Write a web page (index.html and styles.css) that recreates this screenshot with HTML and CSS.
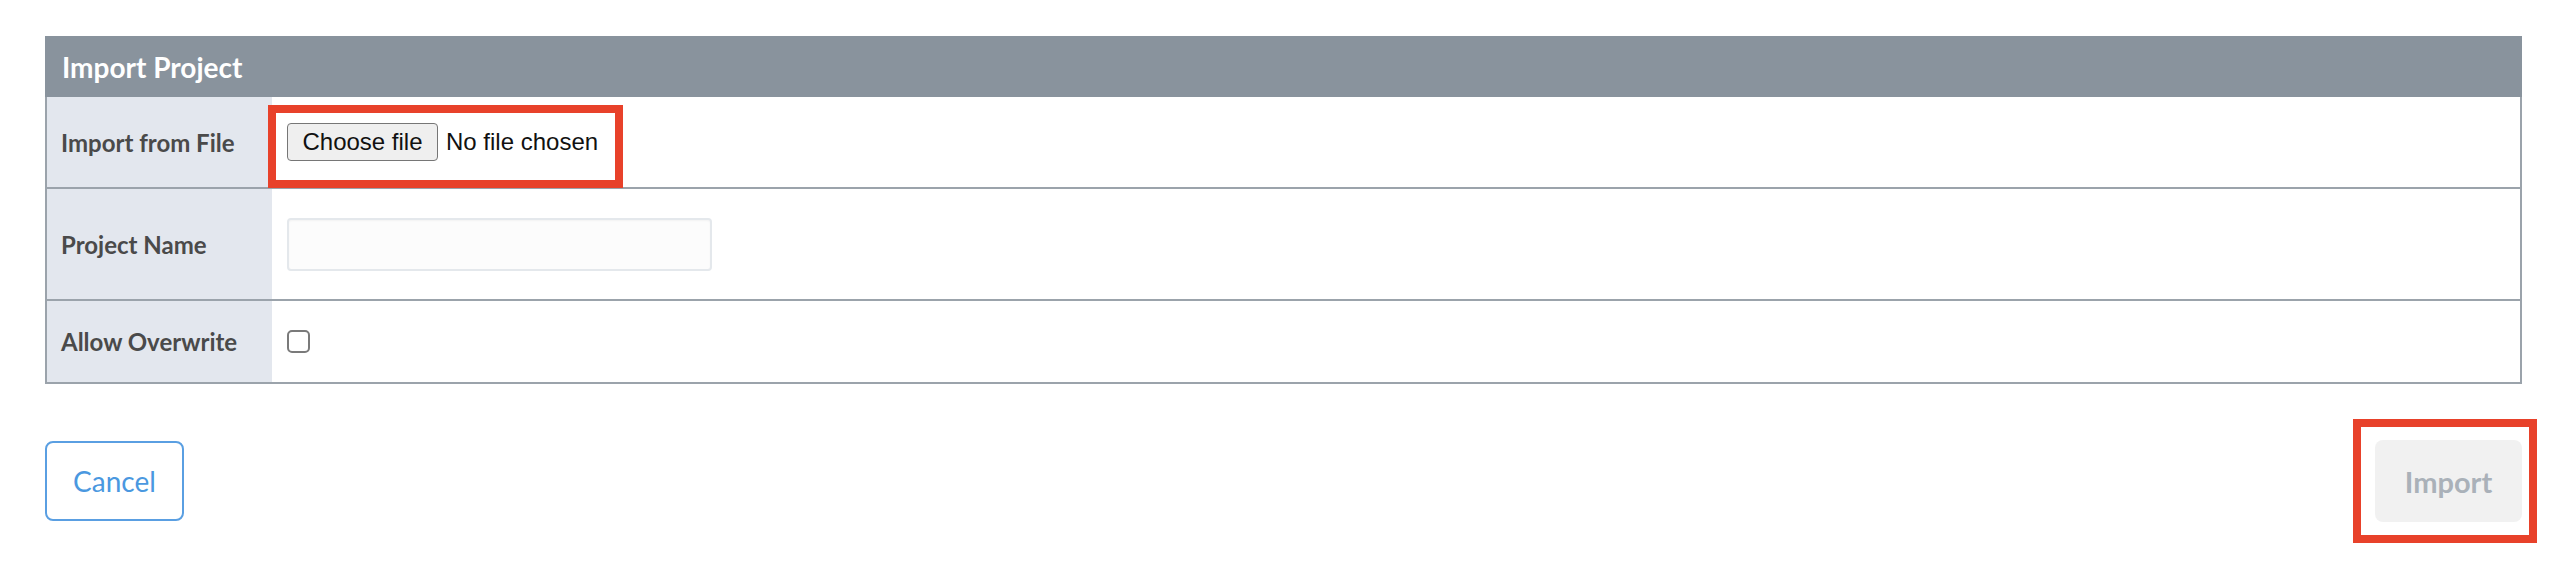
FILE: index.html
```html
<!DOCTYPE html>
<html lang="en">
<head>
  <meta charset="UTF-8">
  <meta name="viewport" content="width=device-width, initial-scale=1.0">
  <title>Import Project</title>
  <link rel="stylesheet" href="styles.css">
</head>
<body>
  <div class="page">
    <div class="panel">
      <div class="panel-header">Import Project</div>

      <div class="row row-file">
        <div class="label">Import from File</div>
        <div class="field">
          <label class="file-picker">
            <input type="file" hidden>
            <span class="file-btn">Choose file</span>
            <span class="file-name">No file chosen</span>
            <span class="highlight highlight-file"></span>
          </label>
        </div>
      </div>

      <div class="row row-name">
        <div class="label">Project Name</div>
        <div class="field">
          <input type="text" class="text-input">
        </div>
      </div>

      <div class="row row-overwrite">
        <div class="label">Allow Overwrite</div>
        <div class="field">
          <input type="checkbox" class="check">
        </div>
      </div>
    </div>

    <div class="actions">
      <button class="btn btn-cancel">Cancel</button>
      <span class="import-wrap">
        <button class="btn btn-import" disabled>Import</button>
        <span class="highlight highlight-import"></span>
      </span>
    </div>
  </div>
</body>
</html>
```

FILE: styles.css
```css
body {
  margin: 0;
  background: #fff;
  font-family: Lato, "Open Sans", sans-serif;
}

.page {
  padding: 36px 38px 40px 45px;
}

.panel {
  border: 2px solid #9ba3ab;
  border-top: none;
}

.panel-header {
  background: #89939d;
  color: #fff;
  font-weight: 700;
  font-size: 28px;
  height: 61px;
  display: flex;
  align-items: center;
  margin: 0 -2px;
  padding-left: 17px;
}

.row {
  display: grid;
  grid-template-columns: 225px 1fr;
  border-top: 2px solid #9ba3ab;
}

.row-file {
  border-top: none;
  height: 90px;
}

.row-name {
  height: 110px;
}

.row-overwrite {
  height: 81px;
}

.label {
  background: #e3e7ee;
  color: #4a4a4a;
  font-weight: 700;
  font-size: 24px;
  display: flex;
  align-items: center;
  padding-left: 14px;
}

.field {
  display: flex;
  align-items: center;
  padding-left: 15px;
}

/* file picker */
.file-picker {
  position: relative;
  display: flex;
  align-items: center;
  gap: 8px;
  font-family: "Liberation Sans", Arial, sans-serif;
  font-size: 24px;
  color: #111;
}

.file-btn {
  display: inline-block;
  width: 151px;
  height: 38px;
  line-height: 36px;
  text-align: center;
  box-sizing: border-box;
  background: #efefef;
  border: 1px solid #767676;
  border-radius: 4px;
}

.highlight {
  position: absolute;
  border: 8px solid #e8412a;
  box-sizing: border-box;
}

.highlight-file {
  left: -19px;
  top: -18px;
  width: 355px;
  height: 83px;
}

.text-input {
  width: 425px;
  height: 53px;
  box-sizing: border-box;
  border: 2px solid #e4e8ec;
  border-radius: 4px;
  background: #fcfcfc;
  box-shadow: inset 0 1px 2px rgba(0, 0, 0, 0.04);
  outline: none;
}

.check {
  appearance: none;
  -webkit-appearance: none;
  width: 23px;
  height: 23px;
  margin: 0;
  border: 2px solid #7a7a7a;
  border-radius: 5px;
  background: #fff;
}

/* buttons */
.actions {
  display: flex;
  justify-content: space-between;
  align-items: center;
  margin-top: 56px;
}

.btn {
  font-family: Lato, "Open Sans", sans-serif;
  border-radius: 8px;
  cursor: pointer;
}

.btn-cancel {
  width: 139px;
  height: 80px;
  background: #fff;
  border: 2px solid #5a9fe2;
  color: #4a98e0;
  font-size: 28px;
}

.import-wrap {
  position: relative;
  display: inline-block;
}

.btn-import {
  display: block;
  width: 147px;
  height: 82px;
  background: #f1f1f1;
  border: none;
  color: #aab1b9;
  font-weight: 700;
  font-size: 29px;
  cursor: default;
}

.highlight-import {
  left: -22px;
  top: -21px;
  width: 184px;
  height: 124px;
}
```
